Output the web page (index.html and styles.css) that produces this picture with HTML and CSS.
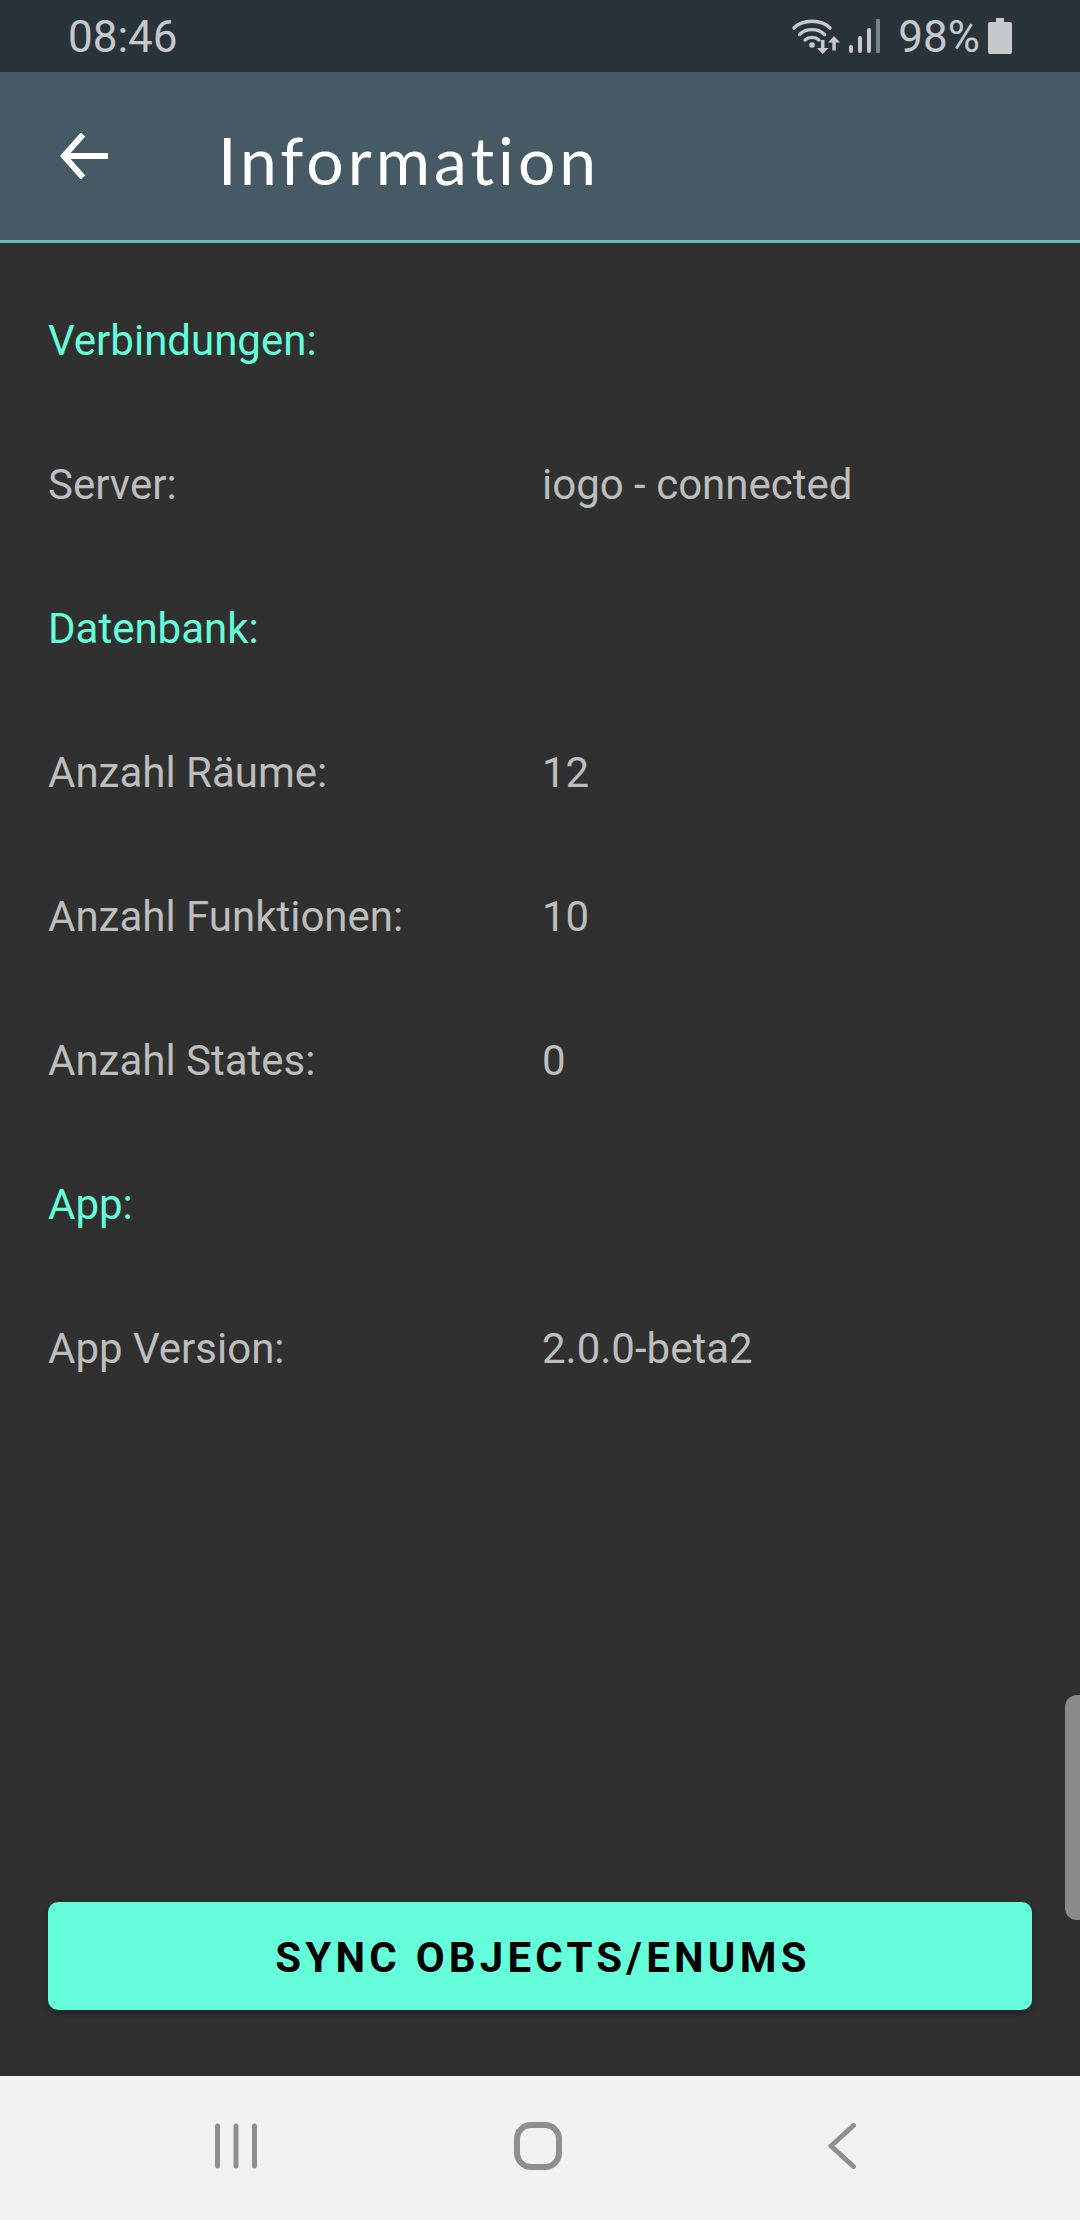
FILE: index.html
```html
<!DOCTYPE html>
<html lang="de">
<head>
    <meta charset="UTF-8">
    <meta name="viewport" content="width=device-width, initial-scale=1.0">
    <title>Information</title>
    <link rel="stylesheet" href="styles.css">
</head>
<body>
<div class="status-bar">
    <span class="status-time">08:46</span>
    <div class="status-icons">
        <svg class="icon-wifi" width="48" height="36" viewBox="0 0 48 36">
            <path d="M2 10 C11 1 29 1 38 10" fill="none" stroke="#c5c9cc" stroke-width="3.4" stroke-linecap="round"/>
            <path d="M7.500 16.500 C14 10 26 10 32.500 16.500" fill="none" stroke="#c5c9cc" stroke-width="3.400" stroke-linecap="round"/>
            <path d="M13 22 C17 18.500 23 18.500 27 22" fill="none" stroke="#c5c9cc" stroke-width="3.400" stroke-linecap="round"/>
            <circle cx="20" cy="27" r="2.800" fill="#c5c9cc"/>
            <path d="M29 22 h3.500 v8 h4 l-5.750 6 l-5.750 -6 h4 z" fill="#c5c9cc"/>
            <path d="M42 18 l6 6.500 h-4.200 v8 h-3.500 v-8 h-4.300 z" fill="#c5c9cc"/>
        </svg>
        <svg class="icon-signal" width="31" height="34" viewBox="0 0 31 34">
            <rect x="0" y="26" width="4" height="8" rx="2" fill="#c5c9cc"/>
            <rect x="9" y="17" width="4" height="17" rx="2" fill="#c5c9cc"/>
            <rect x="18" y="9" width="4" height="25" rx="2" fill="#c5c9cc"/>
            <rect x="27" y="0" width="4" height="34" rx="1" fill="#78828a"/>
        </svg>
        <span class="status-battery">98%</span>
        <svg class="icon-battery" width="24" height="36" viewBox="0 0 24 36">
            <path d="M8 0 h8 v4 h6 q2 0 2 2 v28 q0 2 -2 2 h-20 q-2 0 -2 -2 v-28 q0 -2 2 -2 h6 z" fill="#c5c9cc"/>
        </svg>
    </div>
</div>

<header class="toolbar">
    <svg class="icon-back" width="48" height="46" viewBox="0 0 48 46">
        <path d="M48 23 H4 M23 1.500 L4 23 L23 44.500" fill="none" stroke="#fff" stroke-width="6"/>
    </svg>
    <h1 class="toolbar-title">Information</h1>
</header>

<main class="content">
    <div class="row section">Verbindungen:</div>
    <div class="row"><span class="row-label">Server:</span><span>iogo - connected</span></div>
    <div class="row section">Datenbank:</div>
    <div class="row"><span class="row-label">Anzahl Räume:</span><span>12</span></div>
    <div class="row"><span class="row-label">Anzahl Funktionen:</span><span>10</span></div>
    <div class="row"><span class="row-label">Anzahl States:</span><span>0</span></div>
    <div class="row section">App:</div>
    <div class="row"><span class="row-label">App Version:</span><span>2.0.0-beta2</span></div>
    <button class="sync-btn">SYNC OBJECTS/ENUMS</button>
    <div class="scroll-thumb"></div>
</main>

<nav class="nav-bar">
    <svg width="42" height="46" viewBox="0 0 42 46">
        <path d="M2.500 3 V43 M21 3 V43 M39.500 3 V43" fill="none" stroke="#8f8f8f" stroke-width="5" stroke-linecap="round"/>
    </svg>
    <svg width="48" height="48" viewBox="0 0 48 48">
        <rect x="3" y="3" width="42" height="42" rx="14" fill="none" stroke="#8f8f8f" stroke-width="6"/>
    </svg>
    <svg width="28" height="46" viewBox="0 0 28 46">
        <path d="M25.500 2.500 L3 23 M3 23 L25.500 43.500" fill="none" stroke="#8f8f8f" stroke-width="5" stroke-linecap="round"/>
    </svg>
</nav>
</body>
</html>
```

FILE: styles.css
```css
body{
    margin: 0;
    width: 1080px;
    height: 2220px;
    display: flex;
    flex-direction: column;
    background-color: #303030;
    font-family: Roboto, sans-serif;
    overflow: hidden;
}

.status-bar{
    height: 72px;
    flex-shrink: 0;
    display: flex;
    justify-content: space-between;
    align-items: center;
    padding: 0 68px 0 68px;
    background-color: #29333a;
    color: #c5c9cc;
    font-size: 44px;
}
.status-time{
    padding-top: 2px;
}
.status-icons{
    display: flex;
    align-items: center;
}
.status-battery{
    margin: 0 8px 0 18px;
    padding-top: 2px;
}
.icon-signal{
    margin-left: 9px;
}

.toolbar{
    height: 168px;
    flex-shrink: 0;
    display: flex;
    align-items: center;
    padding-left: 60px;
    background-color: #465a65;
    border-bottom: 3px solid #6bbcb4;
}
.toolbar-title{
    margin: 6px 0 0 110px;
    font-family: Lato, sans-serif;
    font-size: 66px;
    font-weight: 400;
    letter-spacing: 4px;
    color: #fff;
}

.content{
    position: relative;
    flex: 1;
    display: flex;
    flex-direction: column;
    padding: 25px 48px 66px;
}
.row{
    height: 144px;
    flex-shrink: 0;
    display: flex;
    align-items: center;
    font-size: 42px;
    color: #bdbdbd;
}
.row-label{
    width: 494px;
}
.section{
    color: #64ffda;
}

.sync-btn{
    margin-top: auto;
    height: 108px;
    padding: 2px 0 0 6px;
    border: none;
    border-radius: 10px;
    background-color: #64ffda;
    box-shadow: 0 3px 6px rgba(0,0,0,.35);
    font-family: Roboto, sans-serif;
    font-size: 42px;
    font-weight: 700;
    letter-spacing: 4.200px;
    color: #000;
}

.scroll-thumb{
    position: absolute;
    right: 0;
    top: 1452px;
    width: 15px;
    height: 225px;
    border-radius: 12px 0 0 12px;
    background-color: #8a8a8a;
}

.nav-bar{
    height: 140px;
    padding-bottom: 4px;
    flex-shrink: 0;
    display: flex;
    align-items: center;
    background-color: #f2f2f2;
    padding-left: 215px;
}
.nav-bar svg:nth-child(2){
    margin-left: 257px;
}
.nav-bar svg:nth-child(3){
    margin-left: 266px;
}
```
